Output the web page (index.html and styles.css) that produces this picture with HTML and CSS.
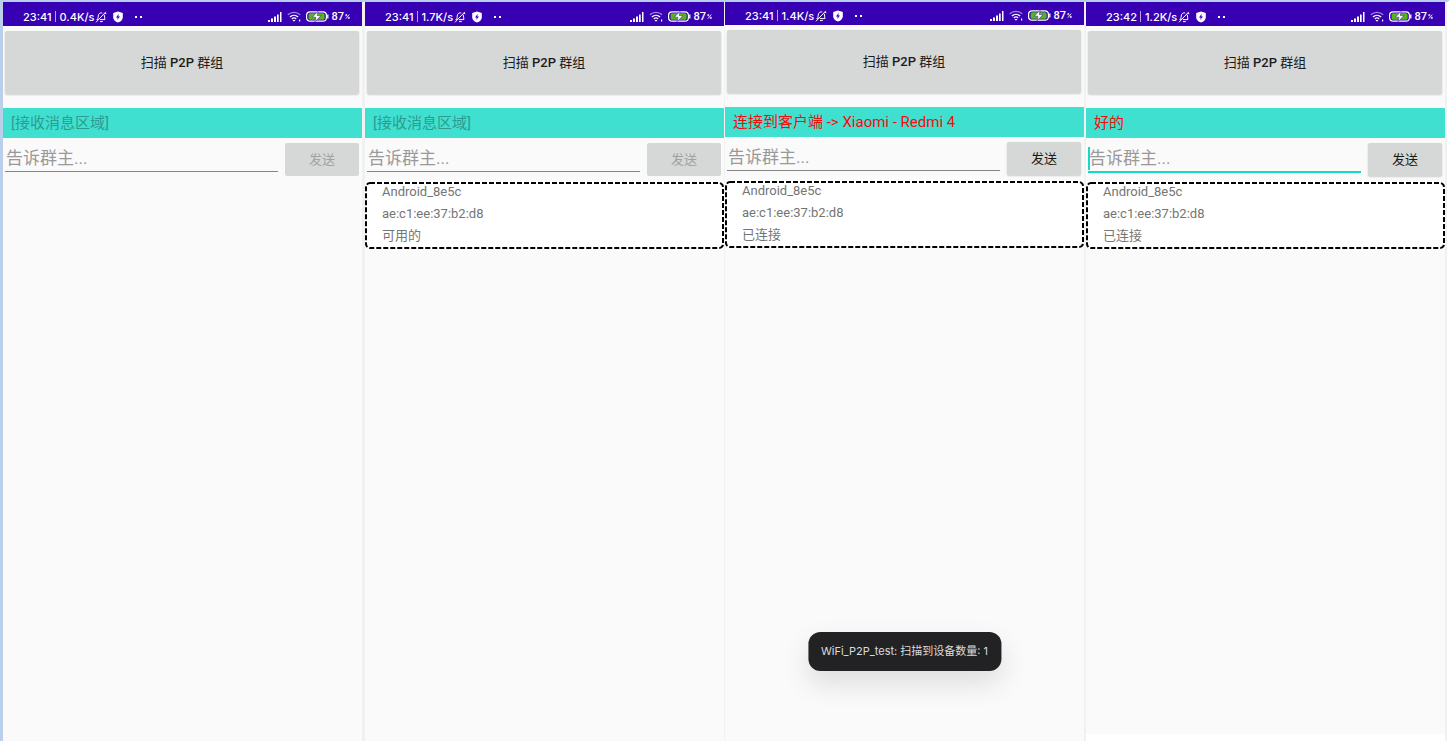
FILE: index.html
```html
<!DOCTYPE html>
<html lang="zh-CN">
<head>
<meta charset="utf-8">
<meta name="viewport" content="width=device-width, initial-scale=1">
<title>WiFi P2P</title>
<link rel="stylesheet" href="styles.css">
</head>
<body>
<svg class="symbols" aria-hidden="true">
  <symbol id="bell" viewBox="0 0 12 12"><g fill="none" stroke="#fff" stroke-width="1"><path d="M1.500 8.600h1.300c.5-1.500 0-3.400.7-4.900C4.200 2.100 5.700 1.500 7.300 2M9.200 3.600c.7 1.600.2 3.500.7 5H5M5 10.600h2.800M1 11.300 10.800.9M10 2.200l1.300.6"/></g></symbol>
  <symbol id="shield" viewBox="0 0 12 12"><path fill="#fff" d="M6 .6 10.800 2v4.200c0 2.500-1.900 4.300-4.800 5.300C3.100 10.500 1.200 8.700 1.200 6.200V2z"/><path fill="#3700b3" d="M6.700 2.800 4 6.400h1.700l-.5 2.700L8 5.500H6.300z"/></symbol>
  <symbol id="signal" viewBox="0 0 14 10"><path fill="#fff" d="M0 8h2v2H0zM3 6.500h2V10H3zM6 4.500h2V10H6zM9 2.500h1.700V10H9zM12 0h1.500v10H12z"/></symbol>
  <symbol id="wifi" viewBox="0 0 14 11"><g fill="none" stroke="#fff"><path stroke-width="1.200" opacity=".55" d="M.8 3.800C4.300.5 9.700.5 13.200 3.800"/><path stroke-width="1.400" d="M2.900 6c2.400-2.200 5.800-2.200 8.200 0"/><path stroke-width="1.200" d="M4.800 8c1.300-1.200 3.100-1.200 4.400 0"/></g><path fill="#fff" d="M5.500 9h3L7 10.700zM12 8.500h1.200v2H12z"/></symbol>
  <symbol id="battery" viewBox="0 0 23 11"><rect x=".6" y=".8" width="19.800" height="9.400" rx="3.500" fill="none" stroke="#fff" stroke-width="1.200"/><path d="M21.800 3.500v4" stroke="#fff" stroke-width="1.300"/><rect x="2.600" y="2.300" width="16" height="6.400" rx="1.500" fill="#56b41c"/><path fill="#fff" stroke="#3700b3" stroke-width=".5" d="M12 .3 6.300 6.200h3.600L9 10.800l6-6.200h-3.700z"/></symbol>
  <symbol id="percent" viewBox="0 0 5 5"><path fill="none" stroke="#fff" stroke-width=".8" d="M.8.5h1v1.300h-1zM4.300.5.8 4.700M3.300 3.200h1v1.300h-1z"/></symbol>
</svg>

<main class="phones">
  <section class="phone">
    <header class="status">
      <span class="net">23:41<i class="bar"></i>0.4K/s</span>
      <svg class="icon-bell"><use href="#bell"/></svg><svg class="icon-shield"><use href="#shield"/></svg><span class="dots"><i></i><i></i></span>
      <span class="right"><svg class="icon-signal"><use href="#signal"/></svg><svg class="icon-wifi"><use href="#wifi"/></svg><svg class="icon-battery"><use href="#battery"/></svg><span class="level">87</span><svg class="icon-percent"><use href="#percent"/></svg></span>
    </header>
    <button class="btn scan" type="button">扫描 <b>P2P</b> 群组</button>
    <p class="message">[接收消息区域]</p>
    <form class="compose">
      <div class="field"><input type="text" placeholder="告诉群主..." aria-label="告诉群主"></div>
      <button class="btn send" type="button" disabled>发送</button>
    </form>
  </section>

  <section class="phone">
    <header class="status">
      <span class="net">23:41<i class="bar"></i>1.7K/s</span>
      <svg class="icon-bell"><use href="#bell"/></svg><svg class="icon-shield"><use href="#shield"/></svg><span class="dots"><i></i><i></i></span>
      <span class="right"><svg class="icon-signal"><use href="#signal"/></svg><svg class="icon-wifi"><use href="#wifi"/></svg><svg class="icon-battery"><use href="#battery"/></svg><span class="level">87</span><svg class="icon-percent"><use href="#percent"/></svg></span>
    </header>
    <button class="btn scan" type="button">扫描 <b>P2P</b> 群组</button>
    <p class="message">[接收消息区域]</p>
    <form class="compose">
      <div class="field"><input type="text" placeholder="告诉群主..." aria-label="告诉群主"></div>
      <button class="btn send" type="button" disabled>发送</button>
    </form>
    <div class="device">
      <svg class="outline" aria-hidden="true"><rect x="1" y="1" rx="4"/></svg>
      <p>Android_8e5c</p><p>ae:c1:ee:37:b2:d8</p><p>可用的</p>
    </div>
  </section>

  <section class="phone compact">
    <header class="status">
      <span class="net">23:41<i class="bar"></i>1.4K/s</span>
      <svg class="icon-bell"><use href="#bell"/></svg><svg class="icon-shield"><use href="#shield"/></svg><span class="dots"><i></i><i></i></span>
      <span class="right"><svg class="icon-signal"><use href="#signal"/></svg><svg class="icon-wifi"><use href="#wifi"/></svg><svg class="icon-battery"><use href="#battery"/></svg><span class="level">87</span><svg class="icon-percent"><use href="#percent"/></svg></span>
    </header>
    <button class="btn scan" type="button">扫描 <b>P2P</b> 群组</button>
    <p class="message live">连接到客户端 -&gt; Xiaomi - Redmi 4</p>
    <form class="compose">
      <div class="field"><input type="text" placeholder="告诉群主..." aria-label="告诉群主"></div>
      <button class="btn send" type="button">发送</button>
    </form>
    <div class="device">
      <svg class="outline" aria-hidden="true"><rect x="1" y="1" rx="4"/></svg>
      <p>Android_8e5c</p><p>ae:c1:ee:37:b2:d8</p><p>已连接</p>
    </div>
    <div class="toast" role="status">WiFi_P2P_test: 扫描到设备数量: 1</div>
  </section>

  <section class="phone last">
    <header class="status">
      <span class="net">23:42<i class="bar"></i>1.2K/s</span>
      <svg class="icon-bell"><use href="#bell"/></svg><svg class="icon-shield"><use href="#shield"/></svg><span class="dots"><i></i><i></i></span>
      <span class="right"><svg class="icon-signal"><use href="#signal"/></svg><svg class="icon-wifi"><use href="#wifi"/></svg><svg class="icon-battery"><use href="#battery"/></svg><span class="level">87</span><svg class="icon-percent"><use href="#percent"/></svg></span>
    </header>
    <button class="btn scan" type="button">扫描 <b>P2P</b> 群组</button>
    <p class="message live">好的</p>
    <form class="compose">
      <div class="field active"><input type="text" placeholder="告诉群主..." aria-label="告诉群主"><i class="caret"></i></div>
      <button class="btn send" type="button">发送</button>
    </form>
    <div class="device">
      <svg class="outline" aria-hidden="true"><rect x="1" y="1" rx="4"/></svg>
      <p>Android_8e5c</p><p>ae:c1:ee:37:b2:d8</p><p>已连接</p>
    </div>
  </section>
</main>
</body>
</html>
```

FILE: styles.css
```css
* { box-sizing: border-box; }

body {
  margin: 0;
  background: #f1f1f1;
  font-family: Roboto, "Noto Sans CJK SC", sans-serif;
}

p { margin: 0; }
.symbols { position: absolute; width: 0; height: 0; }

.phones {
  display: flex;
  min-height: 100vh;
  border-top: 2px solid #b7cdee;
  border-left: 3px solid #b9cfea;
  border-right: 3px solid #fff;
}

.phone {
  position: relative;
  flex: 1 1 0;
  min-width: 0;
  background: #fafafa;
}
.phone:nth-child(1) { margin-right: 3px; }
.phone:nth-child(2) { margin-right: 1px; }
.phone:nth-child(3) { margin-right: 2px; }
.phone.last { margin-right: 2px; box-shadow: 0 7px #fff; margin-bottom: 7px; }

.status {
  display: flex;
  align-items: center;
  height: 24px;
  padding: 5px 12px 0 20px;
  background: #3700b3;
  color: #fff;
  font: 500 11px/16px Inter, Roboto, sans-serif;
}
.compact .status { height: 23px; padding-top: 4px; }
.status svg { flex: none; display: block; }

.net { display: flex; align-items: center; }
.bar { width: 1px; height: 11px; margin: 0 4px 0 3px; background: #b7a0e4; }
.icon-bell { width: 12px; height: 12px; margin-left: 1px; }
.icon-shield { width: 12px; height: 12px; margin-left: 5px; }
.dots { display: flex; gap: 3px; margin-left: 11px; }
.dots i { width: 2px; height: 2px; background: #fff; }

.right { display: flex; align-items: center; margin-left: auto; }
.icon-signal { width: 14px; height: 10px; }
.icon-wifi { width: 14px; height: 11px; margin-left: 5px; }
.icon-battery { width: 23px; height: 11px; margin-left: 5px; }
.level { margin-left: 2px; font-family: Roboto, sans-serif; }
.icon-percent { width: 5px; height: 5px; margin-left: 1px; }

.btn {
  display: block;
  padding: 0;
  border: 0;
  border-radius: 2px;
  background: #d6d8d7;
  box-shadow: 0 1px 2px rgba(0, 0, 0, 0.18);
  color: #1b1b1b;
  font: 13px/20px Roboto, "Noto Sans CJK SC", sans-serif;
}
.btn b { font-weight: 500; }
.btn:disabled { color: #a0a1a1; box-shadow: none; }
.scan { width: calc(100% - 5px); height: 63px; margin: 5px 3px 14px 2px; }

.message {
  padding: 1px 8px 0;
  background: #40e0d0;
  color: #2d9b91;
  font-size: 15px;
  line-height: 29px;
}
.message.live { color: #f20d0d; }

.compose {
  display: flex;
  gap: 7px;
  padding: 5px 3px 5px 2px;
}
.field { position: relative; flex: 1; min-width: 0; height: 29px; }
.field input {
  display: block;
  width: 100%;
  height: 29px;
  padding: 2px 1px 0;
  border: 0;
  border-bottom: 1px solid #858585;
  border-radius: 0;
  outline: 0;
  background: transparent;
  color: #222;
  font: 17px/24px Roboto, "Noto Sans CJK SC", sans-serif;
}
.field input::placeholder { color: #999; opacity: 1; }
.field.active input { height: 30px; border-bottom: 2px solid #14d8c8; }
.caret {
  position: absolute;
  left: 0;
  top: 4px;
  width: 2px;
  height: 23px;
  background: #14d8c8;
}
.send { flex: none; width: 74px; height: 33px; }

.device {
  position: relative;
  height: 67px;
  padding-left: 17px;
  background: #fff;
  color: #757575;
  font-size: 13px;
  line-height: 22px;
}
.outline { position: absolute; left: 0; top: 1px; width: 100%; height: 100%; }
.outline rect {
  width: calc(100% - 2px);
  height: calc(100% - 2px);
  fill: none;
  stroke: #000;
  stroke-width: 2;
  stroke-dasharray: 5 2;
}

.toast {
  position: absolute;
  left: 50%;
  bottom: 70px;
  transform: translateX(-50%);
  padding: 10px 13px;
  border-radius: 12px;
  background: #222224;
  box-shadow: 0 12px 28px rgba(0, 0, 0, 0.12);
  color: #dcdcdc;
  font: 11px/19px Inter, "Noto Sans CJK SC", sans-serif;
  white-space: nowrap;
}
```
